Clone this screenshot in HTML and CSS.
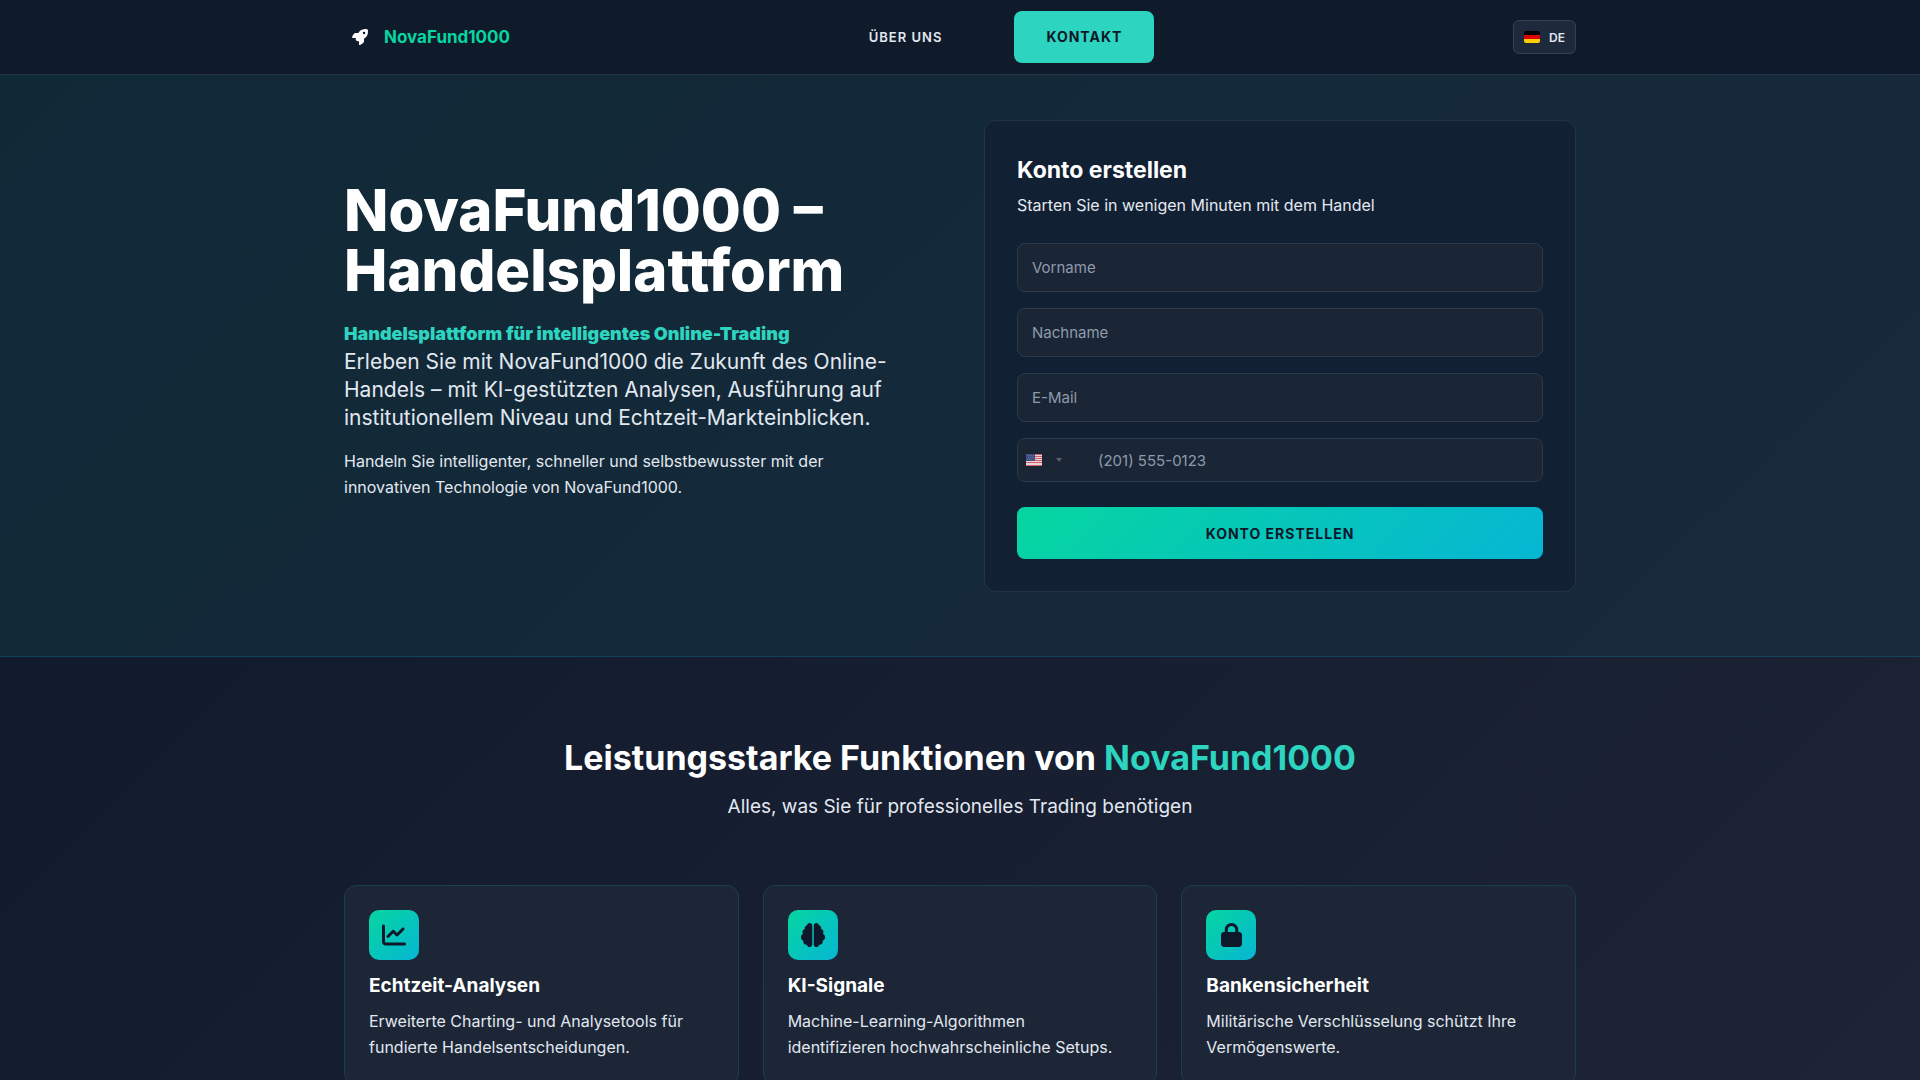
FILE: index.html
```html
<!DOCTYPE html>
<html lang="de">
  <head>
    <meta charset="UTF-8" />
    <meta name="viewport" content="width=device-width, initial-scale=1.0" />
    <title>NovaFund1000</title>
    <link rel="stylesheet" href="styles.css">
  </head>
  <body>
    <header class="header">
      <div class="container header-inner">
        <a class="logo" href="#">
          <svg class="logo-icon" viewBox="0 0 512 512" aria-hidden="true"><path fill="currentColor" d="M156.6 384.9L125.7 354c-8.5-8.5-11.5-20.8-7.7-32.2c3-8.9 7-20.5 11.8-33.8L24 288c-8.6 0-16.6-4.6-20.9-12.1s-4.2-16.7 .2-24.1l52.5-88.5c13-21.9 36.5-35.3 61.9-35.3l82.3 0c2.4-4 4.8-7.7 7.2-11.3C289.1-4.1 411.1-8.1 483.9 5.3c11.6 2.1 20.6 11.2 22.8 22.8c13.4 72.9 9.3 194.8-111.4 276.7c-3.5 2.4-7.3 4.8-11.3 7.2v82.3c0 25.4-13.4 49-35.3 61.9l-88.5 52.5c-7.4 4.4-16.6 4.5-24.1 .2s-12.1-12.2-12.1-20.9V380.8c-14.1 4.9-26.4 8.9-35.7 11.9c-11.2 3.6-23.4 .5-31.8-7.8zM384 168a40 40 0 1 0 0-80 40 40 0 1 0 0 80z"/></svg>
          <span>NovaFund1000</span>
        </a>
        <nav class="nav">
          <a class="nav-link" href="#about">Über uns</a>
          <a class="nav-btn" href="#contact">Kontakt</a>
        </nav>
        <button class="lang" type="button">
          <svg class="flag" viewBox="0 0 16 12" aria-hidden="true">
            <rect width="16" height="4" fill="#000"/>
            <rect y="4" width="16" height="4" fill="#d00"/>
            <rect y="8" width="16" height="4" fill="#ffce00"/>
          </svg>
          DE
        </button>
      </div>
    </header>

    <section class="hero">
      <div class="container hero-grid">
        <div class="hero-text">
          <h1>NovaFund1000 – <br>Handelsplattform</h1>
          <p class="tagline">Handelsplattform für intelligentes Online-Trading</p>
          <p class="lead">Erleben Sie mit NovaFund1000 die Zukunft des Online-<br>Handels – mit KI-gestützten Analysen, Ausführung auf<br>institutionellem Niveau und Echtzeit-Markteinblicken.</p>
          <p class="text">Handeln Sie intelligenter, schneller und selbstbewusster mit der<br>innovativen Technologie von NovaFund1000.</p>
        </div>

        <form class="signup">
          <h2>Konto erstellen</h2>
          <p class="text">Starten Sie in wenigen Minuten mit dem Handel</p>
          <div class="fields">
            <input class="field" type="text" placeholder="Vorname" aria-label="Vorname" />
            <input class="field" type="text" placeholder="Nachname" aria-label="Nachname" />
            <input class="field" type="email" placeholder="E-Mail" aria-label="E-Mail" />
            <div class="phone">
              <button class="country" type="button" aria-label="Land">
                <svg class="flag" viewBox="0 0 16 12" aria-hidden="true">
                  <rect width="16" height="12" fill="#e8d3d8"/>
                  <path stroke="#d0606a" d="M0 .5h16M0 2.5h16M0 4.5h16M0 6.5h16M0 8.5h16M0 11.5h16"/>
                  <rect width="9" height="7" fill="#3c4f80"/>
                  <path stroke="#62729b" stroke-dasharray="1 1" d="M1 1.5h7M2 3.5h6M1 5.5h7"/>
                </svg>
                <svg class="arrow" viewBox="0 0 6 4" aria-hidden="true"><path fill="#5b5f66" d="M0 0h6L3 4z"/></svg>
              </button>
              <input class="phone-input" type="tel" placeholder="(201) 555-0123" aria-label="Telefon" />
            </div>
          </div>
          <button class="submit" type="submit">Konto erstellen</button>
        </form>
      </div>
    </section>

    <section class="features">
      <div class="container">
        <h2 class="features-title">Leistungsstarke Funktionen von <span>NovaFund1000</span></h2>
        <p class="features-sub">Alles, was Sie für professionelles Trading benötigen</p>
        <div class="cards">
          <article class="card">
            <div class="card-icon">
              <svg viewBox="0 0 512 512" aria-hidden="true"><path fill="currentColor" d="M64 64c0-17.700-14.300-32-32-32S0 46.300 0 64V400c0 44.200 35.800 80 80 80H480c17.700 0 32-14.300 32-32s-14.300-32-32-32H80c-8.800 0-16-7.200-16-16V64zm406.600 86.600c12.500-12.500 12.500-32.800 0-45.300s-32.800-12.500-45.300 0L320 210.700l-57.400-57.400c-12.500-12.500-32.800-12.500-45.300 0l-112 112c-12.500 12.500-12.500 32.800 0 45.300s32.800 12.500 45.300 0L240 221.300l57.400 57.400c12.500 12.500 32.800 12.500 45.300 0l128-128z"/></svg>
            </div>
            <h3>Echtzeit-Analysen</h3>
            <p class="text">Erweiterte Charting- und Analysetools für<br>fundierte Handelsentscheidungen.</p>
          </article>
          <article class="card">
            <div class="card-icon">
              <svg viewBox="0 0 512 512" aria-hidden="true"><path fill="currentColor" d="M184 0c30.900 0 56 25.100 56 56V456c0 30.900-25.100 56-56 56c-28.900 0-52.700-21.900-55.700-50.100c-5.200 1.400-10.700 2.100-16.300 2.100c-35.300 0-64-28.700-64-64c0-7.400 1.300-14.600 3.600-21.200C21.400 367.400 0 338.200 0 304c0-31.900 18.700-59.500 45.800-72.300C37.100 220.800 32 207 32 192c0-30.700 21.600-56.300 50.400-62.600C80.800 123.900 80 118 80 112c0-29.900 20.600-55.100 48.300-62.100C131.300 21.900 155.100 0 184 0zM328 0c28.900 0 52.600 21.900 55.700 49.900c27.800 7 48.300 32.100 48.300 62.100c0 6-.8 11.900-2.400 17.400c28.800 6.200 50.400 31.900 50.400 62.600c0 15-5.100 28.800-13.800 39.700C493.300 244.500 512 272.100 512 304c0 34.200-21.400 63.400-51.600 74.800c2.300 6.600 3.600 13.800 3.600 21.200c0 35.300-28.700 64-64 64c-5.600 0-11.100-.7-16.300-2.100c-3 28.200-26.800 50.100-55.700 50.100c-30.900 0-56-25.100-56-56V56c0-30.900 25.100-56 56-56z"/></svg>
            </div>
            <h3>KI-Signale</h3>
            <p class="text">Machine-Learning-Algorithmen<br>identifizieren hochwahrscheinliche Setups.</p>
          </article>
          <article class="card">
            <div class="card-icon">
              <svg viewBox="0 0 448 512" aria-hidden="true"><path fill="currentColor" d="M144 144v48H304V144c0-44.200-35.800-80-80-80s-80 35.800-80 80zM80 192V144C80 64.500 144.500 0 224 0s144 64.500 144 144v48h16c35.300 0 64 28.700 64 64V448c0 35.300-28.700 64-64 64H64c-35.300 0-64-28.700-64-64V256c0-35.300 28.700-64 64-64H80z"/></svg>
            </div>
            <h3>Bankensicherheit</h3>
            <p class="text">Militärische Verschlüsselung schützt Ihre<br>Vermögenswerte.</p>
          </article>
        </div>
      </div>
    </section>
  </body>
</html>
```
FILE: styles.css
```css
* {
  margin: 0;
  padding: 0;
  box-sizing: border-box;
}
body {
  font-family: Inter, "Open Sans", sans-serif;
  font-size: 16px;
  line-height: 26px;
  color: #e2e8f0;
  background: linear-gradient(135deg, #0f172a, #1c2436);
}
a {
  text-decoration: none;
}
h1,
h2,
h3 {
  color: white;
}
.container {
  max-width: 1280px;
  margin: 0 auto;
  padding: 0 24px;
}

/* header */
.header {
  background-color: #0f1a2b;
  border-bottom: 1px solid #263545;
}
.header-inner {
  display: flex;
  justify-content: space-between;
  align-items: center;
  padding-top: 11px;
  padding-bottom: 11px;
}
.logo {
  display: flex;
  align-items: center;
  gap: 16px;
  padding-left: 8px;
  font-size: 17px;
  font-weight: 700;
  color: #06d6a0;
}
.logo-icon {
  width: 16px;
  height: 16px;
  color: white;
}
.nav {
  display: flex;
  align-items: center;
  gap: 72px;
  font-size: 14px;
  text-transform: uppercase;
  letter-spacing: 1px;
}
.nav-link {
  font-size: 13px;
  font-weight: 600;
  color: #e2e8f0;
}
.nav-btn {
  padding: 13px 32px;
  border-radius: 8px;
  font-weight: 700;
  color: #0f172a;
  background-color: #2dd4bf;
}
.lang {
  display: flex;
  align-items: center;
  gap: 9px;
  padding: 0 10px;
  height: 34px;
  font-family: inherit;
  font-size: 12px;
  font-weight: 600;
  color: #e2e8f0;
  background-color: #1e293b;
  border: 1px solid #334155;
  border-radius: 6px;
}
.flag {
  width: 16px;
  height: 12px;
  border-radius: 2px;
}

/* hero */
.hero {
  padding: 45px 0 64px;
  background: linear-gradient(135deg, #102937, #18293b);
  border-bottom: 1px solid #124457;
}
.hero-grid {
  display: grid;
  grid-template-columns: 1fr 1fr;
  align-items: center;
  gap: 48px;
}
.hero-text {
  padding-bottom: 32px;
}
.hero h1 {
  font-size: 58px;
  line-height: 60px;
  font-weight: 800;
  margin-bottom: 20px;
}
.tagline {
  font-size: 18px;
  font-weight: 900;
  line-height: 28px;
  color: #2dd4bf;
}
.lead {
  font-size: 21px;
  line-height: 28px;
  margin-bottom: 16px;
}
.signup {
  padding: 32px;
  background-color: #122033;
  border: 1px solid #223446;
  border-radius: 12px;
}
.signup h2 {
  font-size: 23px;
  line-height: 34px;
  font-weight: 700;
  margin-bottom: 5px;
}
.fields {
  display: flex;
  flex-direction: column;
  gap: 16px;
  margin: 25px 0;
}
.field,
.phone {
  width: 100%;
  height: 49px;
  padding: 0 14px;
  background-color: #1a2636;
  border: 1px solid #2d3a4a;
  border-radius: 8px;
}
.field,
.phone-input {
  font-family: inherit;
  font-size: 15px;
  color: white;
}
.field::placeholder,
.phone-input::placeholder {
  color: #8f9aab;
}
.phone {
  display: flex;
  align-items: center;
  gap: 36px;
  height: 44px;
  padding: 0 8px;
}
.country {
  display: flex;
  align-items: center;
  gap: 14px;
  background: none;
  border: none;
}
.country .flag {
  border-radius: 0;
}
.arrow {
  width: 6px;
  height: 4px;
}
.phone-input {
  flex: 1;
  background: none;
  border: none;
}
.submit {
  width: 100%;
  height: 52px;
  font-family: inherit;
  font-size: 14px;
  font-weight: 700;
  letter-spacing: 1px;
  text-transform: uppercase;
  color: #0f172a;
  background: linear-gradient(135deg, #06d6a0, #06b6d4);
  border: none;
  border-radius: 8px;
}

/* features */
.features {
  padding: 80px 0;
}
.features-title {
  font-size: 34px;
  line-height: 42px;
  font-weight: 700;
  text-align: center;
  margin-bottom: 14px;
}
.features-title span {
  color: #2dd4bf;
}
.features-sub {
  font-size: 19px;
  line-height: 28px;
  text-align: center;
  margin-bottom: 64px;
}
.cards {
  display: grid;
  grid-template-columns: repeat(3, 1fr);
  gap: 24px;
}
.card {
  padding: 24px;
  background-color: #1c2636;
  border: 1px solid #173e51;
  border-radius: 12px;
}
.card-icon {
  display: flex;
  justify-content: center;
  align-items: center;
  width: 50px;
  height: 50px;
  margin-bottom: 12px;
  border-radius: 10px;
  color: #0f172a;
  background: linear-gradient(135deg, #06d6a0, #06b6d4);
}
.card-icon svg {
  height: 24px;
}
.card h3 {
  font-size: 19px;
  line-height: 28px;
  font-weight: 700;
  margin-bottom: 8px;
}
```
